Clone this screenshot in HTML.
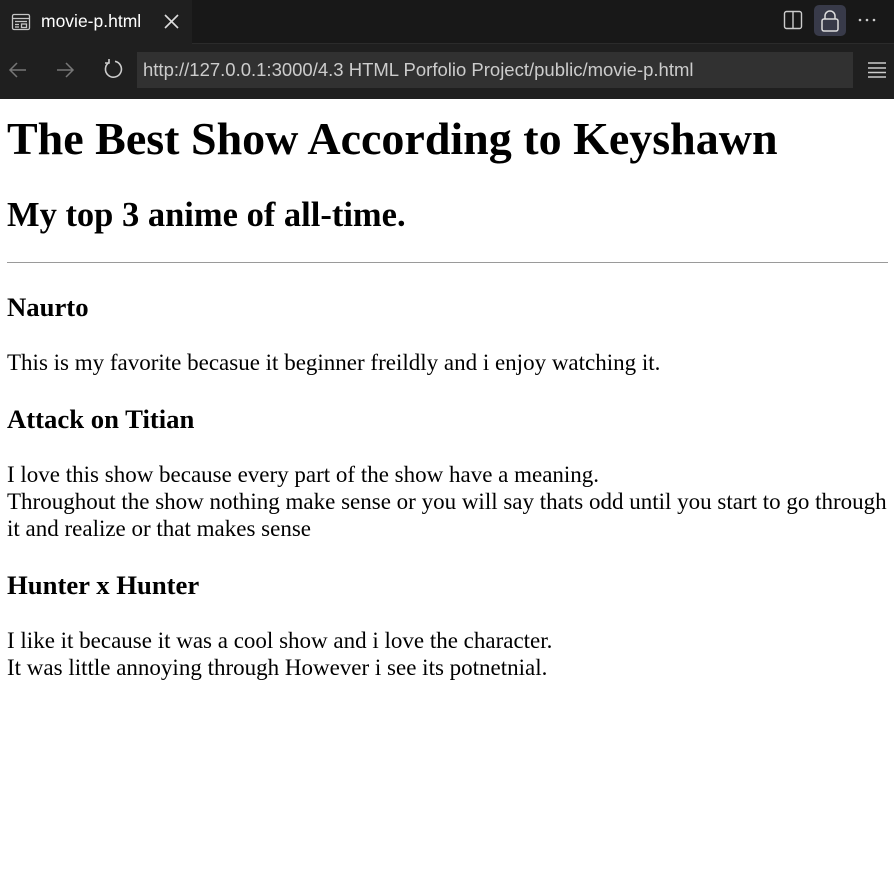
<!DOCTYPE html>
<html><head><meta charset="utf-8"><style>
*{margin:0;padding:0;box-sizing:border-box}
html,body{width:894px;height:890px;overflow:hidden;background:#fff}
.tabbar{position:absolute;left:0;top:0;width:894px;height:44px;background:#181818;border-bottom:1px solid #2b2b2b}
.tab{position:absolute;left:0;top:0;width:192px;height:44px;background:#1f1f1f;color:#fff;font:17.5px "Liberation Sans",sans-serif}
.toolbar{position:absolute;left:0;top:44px;width:894px;height:55px;background:#1f1f1f}
.url{position:absolute;left:137px;top:8px;width:716px;height:36px;background:#313131;color:#ccc;font:18.5px "Liberation Sans",sans-serif;line-height:36px;padding-left:6px;white-space:nowrap}
.c{position:absolute;left:7px;font-family:"Liberation Serif",serif;color:#000;white-space:nowrap}
.h1{font-size:46px;font-weight:bold;line-height:50px}
.h2{font-size:34.5px;font-weight:bold;line-height:40px}
.h3{font-size:26.7px;font-weight:bold;line-height:30px}
.p{font-size:23px;line-height:27px}
</style></head><body>
<div class="tabbar">
 <div class="tab">
  <svg style="position:absolute;left:11px;top:12px" width="20" height="20" viewBox="0 0 20 20" fill="none" stroke="#c5c5c5" stroke-width="1.3"><rect x="1.5" y="2.5" width="17" height="15" rx="1.5"/><line x1="1.5" y1="6.5" x2="18.5" y2="6.5"/><line x1="4" y1="9.5" x2="16" y2="9.5"/><line x1="4" y1="12.5" x2="8" y2="12.5"/><line x1="4" y1="15" x2="8" y2="15"/><rect x="10.5" y="12" width="5" height="3.5"/></svg>
  <span style="position:absolute;left:41px;top:11px">movie-p.html</span>
  <svg style="position:absolute;left:164px;top:14px" width="15" height="15" viewBox="0 0 15 15" stroke="#ddd" stroke-width="1.6"><line x1="1" y1="1" x2="14" y2="14"/><line x1="14" y1="1" x2="1" y2="14"/></svg>
 </div>
 <svg style="position:absolute;left:783px;top:10px" width="20" height="20" viewBox="0 0 20 20" fill="none" stroke="#ccc" stroke-width="1.4"><rect x="1.5" y="1.5" width="17" height="17" rx="2"/><line x1="10" y1="1.5" x2="10" y2="18.5"/></svg>
 <div style="position:absolute;left:814px;top:5px;width:32px;height:31px;border-radius:5px;background:#383a49"></div>
 <svg style="position:absolute;left:820px;top:9px" width="20" height="24" viewBox="0 0 20 24" fill="none" stroke="#ddd" stroke-width="1.5"><rect x="2" y="10" width="16" height="12" rx="2"/><path d="M5 10V7a5 5 0 0 1 10 0v3"/></svg>
 <svg style="position:absolute;left:858px;top:18px" width="20" height="4" viewBox="0 0 20 4" fill="#ccc"><circle cx="2" cy="2" r="1.3"/><circle cx="9" cy="2" r="1.3"/><circle cx="16" cy="2" r="1.3"/></svg>
</div>
<div class="toolbar">
 <svg style="position:absolute;left:8px;top:16px" width="20" height="20" viewBox="0 0 20 20" fill="none" stroke="#777" stroke-width="1.5"><path d="M18 10H2M9 3L2 10l7 7"/></svg>
 <svg style="position:absolute;left:55px;top:16px" width="20" height="20" viewBox="0 0 20 20" fill="none" stroke="#777" stroke-width="1.5"><path d="M2 10h16M11 3l7 7-7 7"/></svg>
 <svg style="position:absolute;left:102px;top:14px" width="22" height="22" viewBox="0 0 22 22" fill="none" stroke="#ccc" stroke-width="1.6"><path d="M7 4.5A8 8 0 1 0 13 3.3"/><path d="M7 1v4h-4"/></svg>
 <div class="url">http://127.0.0.1:3000/4.3 HTML Porfolio Project/public/movie-p.html</div>
 <svg style="position:absolute;left:867px;top:17px" width="20" height="18" viewBox="0 0 20 18" stroke="#ccc" stroke-width="1.5"><line x1="1" y1="2" x2="19" y2="2"/><line x1="1" y1="7" x2="19" y2="7"/><line x1="1" y1="11.5" x2="19" y2="11.5"/><line x1="1" y1="16" x2="19" y2="16"/></svg>
</div>

<div class="c h1" style="top:114px">The Best Show According to Keyshawn</div>
<div class="c h2" style="top:195px">My top 3 anime of all-time.</div>
<div style="position:absolute;left:7px;top:262px;width:881px;height:1px;background:#9a9a9a"></div>
<div class="c h3" style="top:292px">Naurto</div>
<div class="c p" style="top:349px">This is my favorite becasue it beginner freildly and i enjoy watching it.</div>
<div class="c h3" style="top:404px">Attack on Titian</div>
<div class="c p" style="top:461px">I love this show because every part of the show have a meaning.<br>Throughout the show nothing make sense or you will say thats odd until you start to go through<br>it and realize or that makes sense</div>
<div class="c h3" style="top:570px">Hunter x Hunter</div>
<div class="c p" style="top:627px">I like it because it was a cool show and i love the character.<br>It was little annoying through However i see its potnetnial.</div>
</body></html>
